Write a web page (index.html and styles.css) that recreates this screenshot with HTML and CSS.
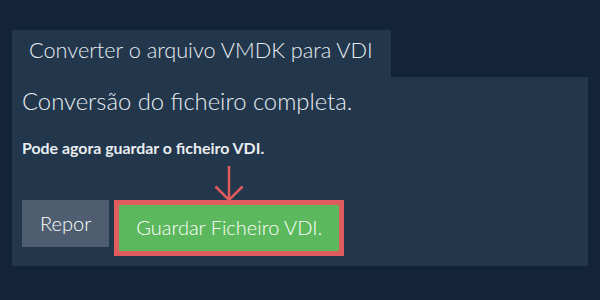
FILE: index.html
```html
<!DOCTYPE html>
<html lang="pt">
<head>
  <meta charset="UTF-8" />
  <meta name="viewport" content="width=device-width, initial-scale=1.0"/>
  <title>Converter VMDK para VDI</title>
  <link rel="stylesheet" href="styles.css">
</head>
<body>
  <div class="page">
    <div class="tab">Converter o arquivo VMDK para VDI</div>
    <div class="panel">
      <h1 class="title">Conversão do ficheiro completa.</h1>
      <p class="note">Pode agora guardar o ficheiro VDI.</p>
      <div class="actions">
        <button class="btn-reset">Repor</button>
        <button class="btn-save">
          <svg class="arrow" width="30" height="38" viewBox="0 0 30 38">
            <line x1="15" y1="1" x2="15" y2="35" stroke="#e05d5d" stroke-width="2.5"/>
            <polyline points="1.5,21.5 15,35 28.5,21.5" fill="none" stroke="#e05d5d" stroke-width="2.5"/>
          </svg>
          Guardar Ficheiro VDI.
        </button>
      </div>
    </div>
  </div>
</body>
</html>
```

FILE: styles.css
```css
body {
  margin: 0;
  background-color: #12233a;
  font-family: Lato, 'Open Sans', sans-serif;
  font-weight: 300;
  color: #e9edf0;
}

.page {
  padding: 30px 12px 0;
}

.tab {
  display: inline-block;
  background: #22364c;
  font-size: 21.7px;
  line-height: 24px;
  padding: 8px 18px 15px 17px;
}

.panel {
  background: #22364c;
  padding: 10px;
}

.title {
  margin: 0;
  font-size: 23.8px;
  font-weight: 300;
}

.note {
  margin: 23px 0 43px;
  font-size: 15.9px;
  font-weight: bold;
}

.actions {
  display: flex;
  align-items: flex-start;
  gap: 5px;
}

button {
  font-family: inherit;
  font-size: 20px;
  font-weight: 300;
  line-height: 23px;
  color: #fff;
  border: none;
  border-radius: 0;
  cursor: pointer;
}

.btn-reset {
  background-color: #4e5e70;
  padding: 12px 18px;
}

.btn-save {
  position: relative;
  background-color: #5cb85c;
  border: 5px solid #e05d5d;
  padding: 11px 17px 12px;
}

.arrow {
  position: absolute;
  left: 50%;
  bottom: 100%;
  margin-left: -15px;
  margin-bottom: 2px;
}
```
